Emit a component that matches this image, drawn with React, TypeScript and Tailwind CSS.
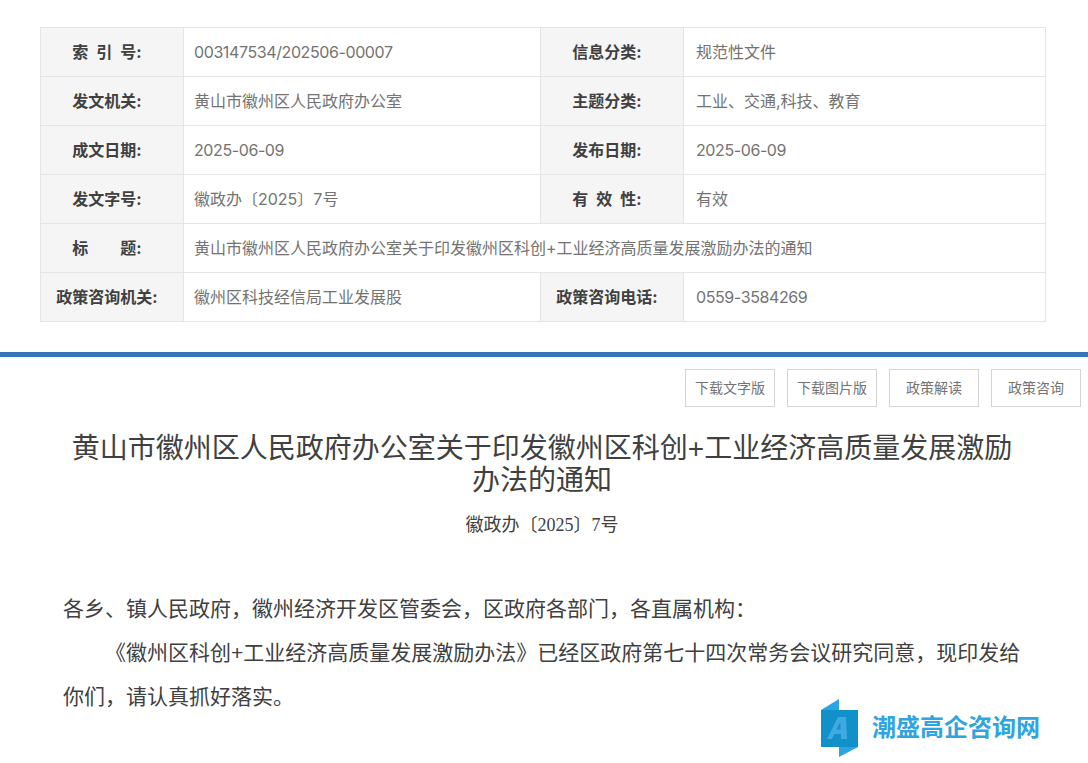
const sans = '"Inter", "Noto Sans CJK SC", sans-serif';
const body = '"Liberation Sans", "Noto Sans CJK SC", sans-serif';
const serif = '"Liberation Serif", "Noto Sans CJK SC", serif';

const rows: [string, string, string?, string?][] = [
  ['索\u2002引\u2002号:', '003147534/202506-00007', '信息分类:', '规范性文件'],
  ['发文机关:', '黄山市徽州区人民政府办公室', '主题分类:', '工业、交通,科技、教育'],
  ['成文日期:', '2025-06-09', '发布日期:', '2025-06-09'],
  ['发文字号:', '徽政办〔2025〕7号', '有\u2002效\u2002性:', '有效'],
  ['标\u2002\u2002\u2002\u2002题:', '黄山市徽州区人民政府办公室关于印发徽州区科创+工业经济高质量发展激励办法的通知'],
  ['政策咨询机关:', '徽州区科技经信局工业发展股', '政策咨询电话:', '0559-3584269'],
];

function Label({ text }: { text: string }) {
  return <td className="border border-neutral-200 bg-neutral-100 py-3 pr-2.5 text-center font-bold text-neutral-700">{text}</td>;
}

function Value({ text, wide, right }: { text: string; wide?: boolean; right?: boolean }) {
  const latin = /^[\d/-]+$/.test(text);
  return (
    <td colSpan={wide ? 3 : 1} className={`border border-neutral-200 py-3 text-neutral-500 ${right ? 'pl-3' : 'pl-2.5'} ${latin ? 'tracking-tight' : ''}`}>
      {text}
    </td>
  );
}

function Logo() {
  return (
    <div className="absolute bottom-1.5 right-12 flex items-center gap-3.5">
      <svg width="37" height="58" viewBox="0 0 37 58">
        <path d="M0 11 18 0V11Z" fill="#2aa5e2" />
        <path d="M18 48H37L18 58Z" fill="#2aa5e2" />
        <rect y="11" width="37" height="37" fill="#1190c9" />
        <path fillRule="evenodd" d="M6 40 17 18h8l1 22h-6l-.2-5h-6.3L11 40ZM15.5 30.5h4l-.1-7.5Z" fill="#3fa9e0" />
      </svg>
      <span className="text-2xl font-bold text-[#2ea5e0]">潮盛高企咨询网</span>
    </div>
  );
}

export default function App() {
  return (
    <div className="relative h-screen overflow-hidden bg-white" style={{ fontFamily: body }}>
      <div className="pt-[27px] pr-10.5 pb-7.5 pl-10" style={{ fontFamily: sans }}>
        <table className="w-full table-fixed border-collapse text-base leading-6">
          <colgroup>
            <col className="w-[143px]" />
            <col />
            <col className="w-[143px]" />
            <col className="w-[362px]" />
          </colgroup>
          <tbody>
            {rows.map((r) => (
              <tr key={r[0]}>
                <Label text={r[0]} />
                <Value text={r[1]} wide={!r[2]} />
                {r[2] && <Label text={r[2]} />}
                {r[3] && <Value text={r[3]} right />}
              </tr>
            ))}
          </tbody>
        </table>
      </div>
      <div className="h-[5px] bg-[#3674b9]" />
      <div className="flex justify-end gap-3 pt-3 pr-1.75">
        {['下载文字版', '下载图片版', '政策解读', '政策咨询'].map((t) => (
          <div key={t} className="flex h-9.5 w-22.5 items-center justify-center border border-neutral-300 text-sm text-neutral-500">{t}</div>
        ))}
      </div>
      <h1 className="mx-auto mt-6.5 max-w-240 pr-1 text-center text-[28px] leading-8 text-neutral-700">
        黄山市徽州区人民政府办公室关于印发徽州区科创+工业经济高质量发展激励办法的通知
      </h1>
      <p className="mt-3 pr-1 text-center text-lg leading-8 text-neutral-700" style={{ fontFamily: serif }}>徽政办〔2025〕7号</p>
      <div className="mt-11.5 pr-16 pl-[63px] text-[21px] leading-11 text-neutral-700">
        <p>{'各乡、镇人民政府\uff0c徽州经济开发区管委会\uff0c区政府各部门\uff0c各直属机构\uff1a'}</p>
        <p className="indent-[2em]">{'《徽州区科创+工业经济高质量发展激励办法》已经区政府第七十四次常务会议研究同意\uff0c现印发给你们\uff0c请认真抓好落实。'}</p>
      </div>
      <Logo />
    </div>
  );
}
